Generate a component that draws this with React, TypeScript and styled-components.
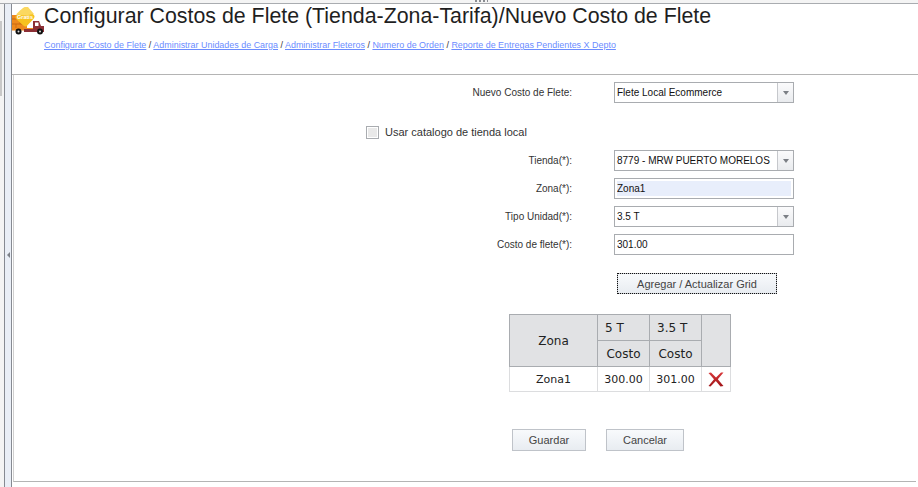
import React from "react";
import styled, { createGlobalStyle } from "styled-components";

const GlobalStyle = createGlobalStyle`
  html, body { margin: 0; padding: 0; height: 100%; background: #fff; overflow: hidden; }
  body { font-family: "Liberation Sans", Arial, sans-serif; color: #222; }
  #root { height: 100%; }
`;

const Page = styled.div`
  width: 918px;
  height: 487px;
  display: flex;
  flex-direction: column;
  overflow: hidden;
`;

const TopBar = styled.div`
  height: 3px;
  flex: none;
  background: #f4f4f4;
  border-bottom: 1px solid #a9acb0;
  padding-left: 475px;
`;

const TopGrip = styled.div`
  width: 13px;
  height: 2px;
  background: repeating-linear-gradient(90deg, #8a8d92 0 2px, transparent 2px 4px);
`;

const Body = styled.div`
  flex: 1;
  display: flex;
  min-height: 0;
`;

const OuterGutter = styled.div`
  width: 4px;
  flex: none;
  background: #f4f4f4;
  display: flex;
  flex-direction: column;
`;

const GutterThumb = styled.div`
  width: 2px;
  height: 75px;
  margin-top: 17px;
  background: #c8c8c8;
`;

const Splitter = styled.div`
  width: 6px;
  flex: none;
  background: #e9eef6;
  border-left: 1px solid #868a92;
  border-right: 1px solid #868a92;
  display: flex;
  align-items: center;
  justify-content: center;
`;

const SplitterArrow = styled.span`
  width: 0;
  height: 0;
  margin-top: 18px;
  border-top: 3px solid transparent;
  border-bottom: 3px solid transparent;
  border-right: 3px solid #7d8188;
`;

const Main = styled.main`
  flex: 1;
  min-width: 0;
  display: flex;
  flex-direction: column;
`;

const Header = styled.header`
  height: 71px;
  flex: none;
  display: flex;
  border-bottom: 1px solid #b4b4b4;
  box-sizing: border-box;
`;

const LogoBox = styled.div`
  width: 32px;
  flex: none;
  padding-top: 3px;
`;

const HeaderText = styled.div`
  display: flex;
  flex-direction: column;
  min-width: 0;
`;

const Title = styled.h1`
  margin: 0;
  font-size: 21.35px;
  font-weight: 400;
  line-height: 25px;
  white-space: nowrap;
  color: #1f1f1f;
`;

const Crumbs = styled.nav`
  margin-top: 10px;
  font-size: 8.95px;
  line-height: 12px;
  white-space: nowrap;
  color: #333;
`;

const CrumbLink = styled.a`
  color: #6b8cff;
  text-decoration: underline;
  cursor: pointer;
`;

const Content = styled.section`
  height: 407px;
  margin-right: 2px;
  margin-left: 1px;
  flex: none;
  box-sizing: border-box;
  border-left: 1px solid #d0d0d0;
  border-bottom: 1px solid #b4b4b4;
  padding: 7px 0 0 0;
  display: flex;
  flex-direction: column;
`;

const FieldRow = styled.div<{ $mb?: number }>`
  display: grid;
  grid-template-columns: 558px 180px;
  column-gap: 42px;
  align-items: center;
  height: 21px;
  margin-bottom: ${(p) => p.$mb ?? 7}px;
`;

const FieldLabel = styled.label`
  font-size: 10px;
  text-align: right;
  color: #333;
  white-space: nowrap;
`;

const FieldBox = styled.div`
  height: 21px;
  width: 180px;
  box-sizing: border-box;
  border: 1px solid #a9acb0;
  background: #fff;
  display: flex;
  align-items: stretch;
`;

const FieldValue = styled.span<{ $filled?: boolean }>`
  flex: 1;
  min-width: 0;
  margin: ${(p) => (p.$filled ? "2px" : "0")};
  padding-left: ${(p) => (p.$filled ? "0" : "2px")};
  background: ${(p) => (p.$filled ? "#e8eefb" : "transparent")};
  font-size: 10px;
  line-height: ${(p) => (p.$filled ? "15px" : "19px")};
  color: #111;
  white-space: nowrap;
  overflow: hidden;
`;

const SelectArrowBox = styled.span`
  width: 16px;
  box-sizing: border-box;
  flex: none;
  border-left: 1px solid #c6c8cc;
  background: linear-gradient(#fbfbfc, #e9ebee);
  display: flex;
  align-items: center;
  justify-content: center;
`;

const SelectArrow = styled.span`
  width: 0;
  height: 0;
  border-left: 3px solid transparent;
  border-right: 3px solid transparent;
  border-top: 4px solid #7b7f85;
`;

const CheckRow = styled.div`
  display: flex;
  align-items: center;
  gap: 6px;
  height: 14px;
  margin: 22px 0 11px 352px;
`;

const CheckBox = styled.span`
  width: 11px;
  height: 11px;
  border: 1px solid #a9acb0;
  background: #e9e9e9;
  box-shadow: inset 0 0 0 1px #fff;
  flex: none;
`;

const CheckLabel = styled.span`
  font-size: 11px;
  color: #333;
  white-space: nowrap;
`;

const ActionRow = styled.div`
  display: flex;
  margin: 18px 0 0 603px;
`;

const GridButton = styled.button`
  width: 160px;
  height: 21px;
  padding: 0;
  box-sizing: border-box;
  border: 1px solid #bfc3c9;
  outline: 1px dotted #111;
  outline-offset: -1px;
  background: linear-gradient(#f8fafc, #e8ecf1);
  font: 400 11px "Liberation Sans", Arial, sans-serif;
  color: #444;
`;

const CostTable = styled.table`
  margin: 20px 0 0 495px;
  width: 221px;
  border-collapse: collapse;
  table-layout: fixed;
  font-family: "DejaVu Sans", Verdana, sans-serif;
  font-size: 11px;
  color: #222;
`;

const TableCol = styled.col<{ $w: number }>`
  width: ${(p) => p.$w}px;
`;

const HeadCell = styled.th`
  background: #e1e2e4;
  border: 1px solid #a9acb0;
  font-size: 12px;
  font-weight: 400;
  height: 25px;
  padding: 0;
  text-align: center;
`;

const UnitCell = styled(HeadCell)`
  text-align: left;
  padding-left: 7px;
`;

const DataCell = styled.td`
  border: 1px solid #dcdddf;
  height: 24px;
  padding: 0;
  text-align: center;
  background: #fff;
`;

const FooterRow = styled.div`
  display: flex;
  gap: 20px;
  margin: 37px 0 0 498px;
`;

const FooterButton = styled.button<{ $w: number }>`
  width: ${(p) => p.$w}px;
  height: 22px;
  padding: 0;
  box-sizing: border-box;
  border: 1px solid #bfc3c9;
  background: linear-gradient(#f8fafc, #e8ecf1);
  font: 400 11px "Liberation Sans", Arial, sans-serif;
  color: #444;
`;

const RemoveSvg = styled.svg`
  display: block;
  margin: 0 auto;
`;

const TruckLogo = () => (
  <svg width="33" height="31" viewBox="0 0 33 31" aria-hidden="true">
    <rect x="0" y="8" width="15" height="15" fill="#ee8a1e" />
    <path d="M0 12h15M0 17h15" stroke="#c96a10" strokeWidth="1" />
    <path d="M5 8v4M8 12v5M4 17v6" stroke="#c96a10" strokeWidth="0.8" />
    <rect x="0" y="21" width="30" height="2.500" fill="#ee8a1e" />
    <path d="M21 14h6l2 5h3v6H12v-3h9z" fill="#8c2f35" />
    <rect x="23" y="15.500" width="3.500" height="3.500" fill="#fff" />
    <rect x="5.500" y="2.500" width="15" height="15" rx="3" transform="rotate(42 13 10)" fill="#f7c21f" />
    <path d="M8 3.500l5-3.500 3 0 6 7-9 1.500-9-1z" fill="#fbd860" />
    <text x="13" y="11.500" fontSize="5.500" fill="#fff" textAnchor="middle" fontFamily="Liberation Sans, sans-serif" fontWeight="700">
      Gratis
    </text>
    <circle cx="6.500" cy="24.500" r="3" fill="#111" />
    <circle cx="6.500" cy="24.500" r="1" fill="#ddd" />
    <circle cx="28" cy="24.500" r="3" fill="#111" />
    <circle cx="28" cy="24.500" r="1" fill="#ddd" />
  </svg>
);

const RemoveIcon = () => (
  <RemoveSvg width="16" height="15" viewBox="0 0 16 15" aria-hidden="true">
    <defs>
      <linearGradient id="removeRed" x1="0" y1="0" x2="0" y2="1">
        <stop offset="0" stopColor="#d8383a" />
        <stop offset="1" stopColor="#a01418" />
      </linearGradient>
    </defs>
    <path
      d="M0.5 1 L3 0.5 L8 5.500 L13 0.5 L15.500 0.5 L9.800 7.200 L15.500 14 L12.500 14.500 L7.800 9 L2.500 14.500 L0.500 14 L6 7.200 Z"
      fill="url(#removeRed)"
    />
  </RemoveSvg>
);

const crumbs = [
  "Configurar Costo de Flete",
  "Administrar Unidades de Carga",
  "Administrar Fleteros",
  "Numero de Orden",
  "Reporte de Entregas Pendientes X Depto",
];

export default function App() {
  return (
    <Page>
      <GlobalStyle />
      <TopBar>
        <TopGrip />
      </TopBar>
      <Body>
        <OuterGutter>
          <GutterThumb />
        </OuterGutter>
        <Splitter>
          <SplitterArrow />
        </Splitter>
        <Main>
          <Header>
            <LogoBox>
              <TruckLogo />
            </LogoBox>
            <HeaderText>
              <Title>Configurar Costos de Flete (Tienda-Zona-Tarifa)/Nuevo Costo de Flete</Title>
              <Crumbs>
                {crumbs.map((c, i) => (
                  <React.Fragment key={c}>
                    {i > 0 && " / "}
                    <CrumbLink>{c}</CrumbLink>
                  </React.Fragment>
                ))}
              </Crumbs>
            </HeaderText>
          </Header>
          <Content>
            <FieldRow $mb={0}>
              <FieldLabel>Nuevo Costo de Flete:</FieldLabel>
              <FieldBox>
                <FieldValue>Flete Local Ecommerce</FieldValue>
                <SelectArrowBox><SelectArrow /></SelectArrowBox>
              </FieldBox>
            </FieldRow>
            <CheckRow>
              <CheckBox />
              <CheckLabel>Usar catalogo de tienda local</CheckLabel>
            </CheckRow>
            <FieldRow>
              <FieldLabel>Tienda(*):</FieldLabel>
              <FieldBox>
                <FieldValue>8779 - MRW PUERTO MORELOS</FieldValue>
                <SelectArrowBox><SelectArrow /></SelectArrowBox>
              </FieldBox>
            </FieldRow>
            <FieldRow>
              <FieldLabel>Zona(*):</FieldLabel>
              <FieldBox>
                <FieldValue $filled>Zona1</FieldValue>
              </FieldBox>
            </FieldRow>
            <FieldRow>
              <FieldLabel>Tipo Unidad(*):</FieldLabel>
              <FieldBox>
                <FieldValue>3.5 T</FieldValue>
                <SelectArrowBox><SelectArrow /></SelectArrowBox>
              </FieldBox>
            </FieldRow>
            <FieldRow $mb={0}>
              <FieldLabel>Costo de flete(*):</FieldLabel>
              <FieldBox>
                <FieldValue>301.00</FieldValue>
              </FieldBox>
            </FieldRow>
            <ActionRow>
              <GridButton type="button">Agregar / Actualizar Grid</GridButton>
            </ActionRow>
            <CostTable>
              <colgroup>
                <TableCol $w={88} />
                <TableCol $w={52} />
                <TableCol $w={52} />
                <TableCol $w={29} />
              </colgroup>
              <thead>
                <tr>
                  <HeadCell rowSpan={2}>Zona</HeadCell>
                  <UnitCell>5 T</UnitCell>
                  <UnitCell>3.5 T</UnitCell>
                  <HeadCell rowSpan={2} />
                </tr>
                <tr>
                  <HeadCell>Costo</HeadCell>
                  <HeadCell>Costo</HeadCell>
                </tr>
              </thead>
              <tbody>
                <tr>
                  <DataCell>Zona1</DataCell>
                  <DataCell>300.00</DataCell>
                  <DataCell>301.00</DataCell>
                  <DataCell><RemoveIcon /></DataCell>
                </tr>
              </tbody>
            </CostTable>
            <FooterRow>
              <FooterButton type="button" $w={74}>Guardar</FooterButton>
              <FooterButton type="button" $w={78}>Cancelar</FooterButton>
            </FooterRow>
          </Content>
        </Main>
      </Body>
    </Page>
  );
}
